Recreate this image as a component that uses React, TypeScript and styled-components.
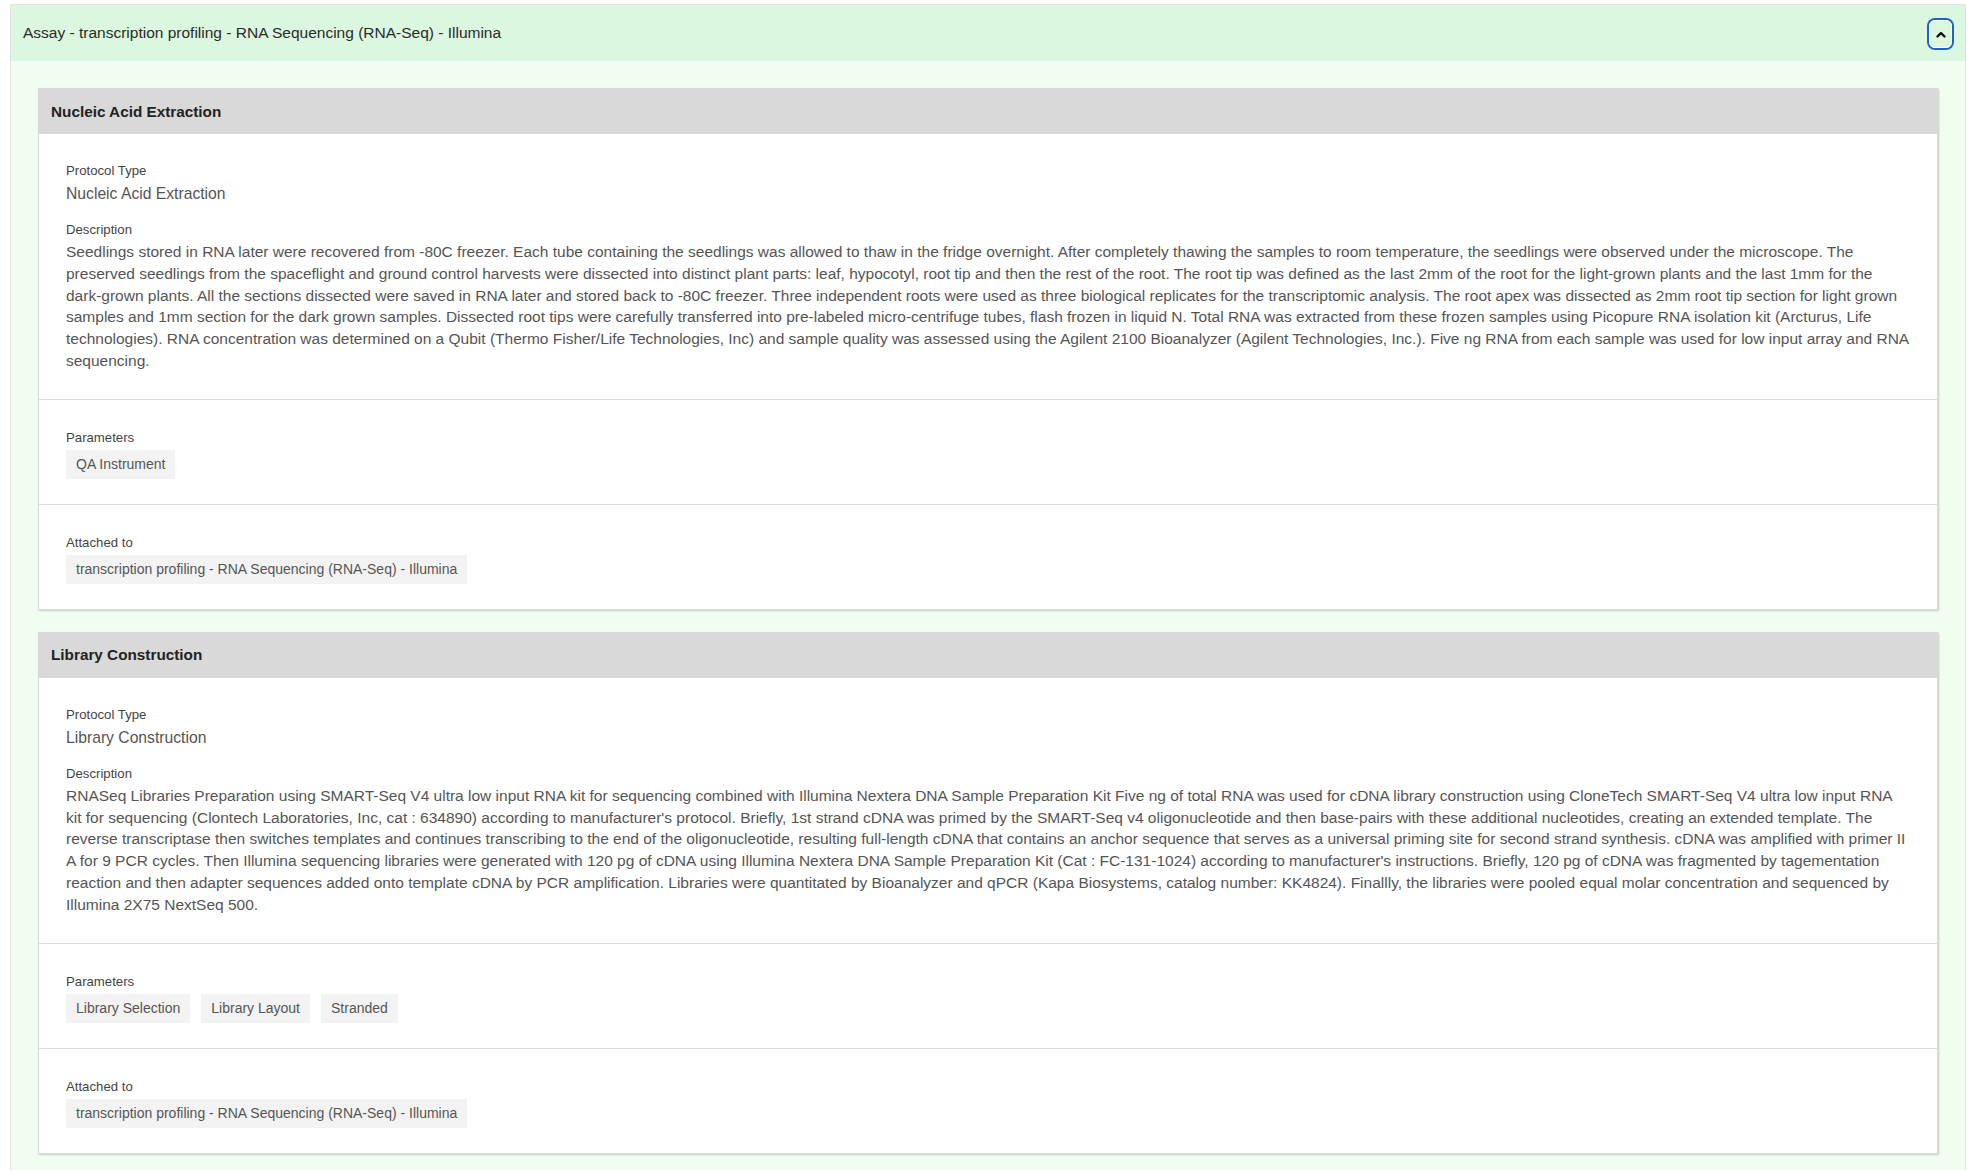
import styled, { createGlobalStyle } from 'styled-components';

const GlobalStyle = createGlobalStyle`
  body {
    margin: 0;
    background: #ffffff;
    font-family: "Liberation Sans", Arial, Helvetica, sans-serif;
  }
`;

type Protocol = {
  title: string;
  type: string;
  description: string;
  parameters: string[];
  attachedTo: string[];
};

const protocols: Protocol[] = [
  {
    title: 'Nucleic Acid Extraction',
    type: 'Nucleic Acid Extraction',
    description:
      'Seedlings stored in RNA later were recovered from -80C freezer. Each tube containing the seedlings was allowed to thaw in the fridge overnight. After completely thawing the samples to room temperature, the seedlings were observed under the microscope. The preserved seedlings from the spaceflight and ground control harvests were dissected into distinct plant parts: leaf, hypocotyl, root tip and then the rest of the root. The root tip was defined as the last 2mm of the root for the light-grown plants and the last 1mm for the dark-grown plants. All the sections dissected were saved in RNA later and stored back to -80C freezer. Three independent roots were used as three biological replicates for the transcriptomic analysis. The root apex was dissected as 2mm root tip section for light grown samples and 1mm section for the dark grown samples. Dissected root tips were carefully transferred into pre-labeled micro-centrifuge tubes, flash frozen in liquid N. Total RNA was extracted from these frozen samples using Picopure RNA isolation kit (Arcturus, Life technologies). RNA concentration was determined on a Qubit (Thermo Fisher/Life Technologies, Inc) and sample quality was assessed using the Agilent 2100 Bioanalyzer (Agilent Technologies, Inc.). Five ng RNA from each sample was used for low input array and RNA sequencing.',
    parameters: ['QA Instrument'],
    attachedTo: ['transcription profiling - RNA Sequencing (RNA-Seq) - Illumina'],
  },
  {
    title: 'Library Construction',
    type: 'Library Construction',
    description:
      "RNASeq Libraries Preparation using SMART-Seq V4 ultra low input RNA kit for sequencing combined with Illumina Nextera DNA Sample Preparation Kit Five ng of total RNA was used for cDNA library construction using CloneTech SMART-Seq V4 ultra low input RNA kit for sequencing (Clontech Laboratories, Inc, cat : 634890) according to manufacturer's protocol. Briefly, 1st strand cDNA was primed by the SMART-Seq v4 oligonucleotide and then base-pairs with these additional nucleotides, creating an extended template. The reverse transcriptase then switches templates and continues transcribing to the end of the oligonucleotide, resulting full-length cDNA that contains an anchor sequence that serves as a universal priming site for second strand synthesis. cDNA was amplified with primer II A for 9 PCR cycles. Then Illumina sequencing libraries were generated with 120 pg of cDNA using Illumina Nextera DNA Sample Preparation Kit (Cat : FC-131-1024) according to manufacturer's instructions. Briefly, 120 pg of cDNA was fragmented by tagementation reaction and then adapter sequences added onto template cDNA by PCR amplification. Libraries were quantitated by Bioanalyzer and qPCR (Kapa Biosystems, catalog number: KK4824). Finallly, the libraries were pooled equal molar concentration and sequenced by Illumina 2X75 NextSeq 500.",
    parameters: ['Library Selection', 'Library Layout', 'Stranded'],
    attachedTo: ['transcription profiling - RNA Sequencing (RNA-Seq) - Illumina'],
  },
];

const App: React.FC = () => {
  return (
    <>
      <GlobalStyle />
      <Panel>
        <PanelHeader>
          <PanelTitle>Assay - transcription profiling - RNA Sequencing (RNA-Seq) - Illumina</PanelTitle>
          <CollapseButton aria-label="collapse">
            <svg width="10" height="7" viewBox="0 0 10 7">
              <polyline
                points="1.5,5.5 5,2 8.5,5.5"
                fill="none"
                stroke="#111"
                strokeWidth="2.4"
                strokeLinecap="round"
                strokeLinejoin="round"
              />
            </svg>
          </CollapseButton>
        </PanelHeader>
        <PanelBody>
          {protocols.map((p) => (
            <Card key={p.title}>
              <CardHeader>{p.title}</CardHeader>
              <Section>
                <Label>Protocol Type</Label>
                <Value>{p.type}</Value>
                <Label $spaced>Description</Label>
                <Description>{p.description}</Description>
              </Section>
              <Section $compact>
                <Label>Parameters</Label>
                <ChipRow>
                  {p.parameters.map((param) => (
                    <Chip key={param}>{param}</Chip>
                  ))}
                </ChipRow>
              </Section>
              <Section $compact>
                <Label>Attached to</Label>
                <ChipRow>
                  {p.attachedTo.map((a) => (
                    <Chip key={a}>{a}</Chip>
                  ))}
                </ChipRow>
              </Section>
            </Card>
          ))}
        </PanelBody>
      </Panel>
    </>
  );
};

const Panel = styled.div`
  margin: 4px 10px 0 10px;
  border: 1px solid #e2e4e2;
  border-bottom: none;
  background: #f1fdf1;
  min-height: 1166px;
  box-sizing: border-box;
`;

const PanelHeader = styled.div`
  display: flex;
  align-items: center;
  justify-content: space-between;
  height: 56px;
  padding: 0 13px 0 12px;
  background: #dcf7df;
`;

const PanelTitle = styled.span`
  font-size: 15.5px;
  color: #2a2a2a;
`;

const CollapseButton = styled.button`
  display: flex;
  align-items: center;
  justify-content: center;
  width: 23px;
  height: 28px;
  padding: 0;
  margin-top: 2px;
  background: transparent;
  border: 1px solid #ffffff;
  border-radius: 6px;
  box-shadow: 0 0 0 2px #1f5fd4;
  cursor: pointer;
`;

const PanelBody = styled.div`
  display: flex;
  flex-direction: column;
  gap: 22px;
  padding: 27px 27px 12px 27px;
`;

const Card = styled.div`
  background: #ffffff;
  border: 1px solid #d8d8d8;
  box-shadow: 1px 1px 2px rgba(0, 0, 0, 0.18);
`;

const CardHeader = styled.div`
  display: flex;
  align-items: center;
  height: 45px;
  padding: 0 12px;
  background: #d9d9d9;
  font-size: 15.3px;
  font-weight: bold;
  color: #222;
`;

const Section = styled.div<{ $compact?: boolean }>`
  padding: ${(p) => (p.$compact ? '29px 27px 25px' : '28px 27px 27px')};
  & + & {
    border-top: 1px solid #dedede;
  }
`;

const Label = styled.div<{ $spaced?: boolean }>`
  font-size: 13.2px;
  line-height: 18px;
  color: #444;
  margin-top: ${(p) => (p.$spaced ? '16px' : '0')};
`;

const Value = styled.div`
  font-size: 15.7px;
  line-height: 22px;
  color: #555;
  margin-top: 3px;
`;

const Description = styled.div`
  font-size: 15.5px;
  line-height: 21.8px;
  color: #555;
  margin-top: 2px;
`;

const ChipRow = styled.div`
  display: flex;
  flex-wrap: wrap;
  gap: 11px;
  margin-top: 3px;
`;

const Chip = styled.span`
  display: inline-flex;
  align-items: center;
  height: 29px;
  padding: 0 10px;
  background: #f3f3f3;
  font-size: 14px;
  color: #555;
`;

export default App;
